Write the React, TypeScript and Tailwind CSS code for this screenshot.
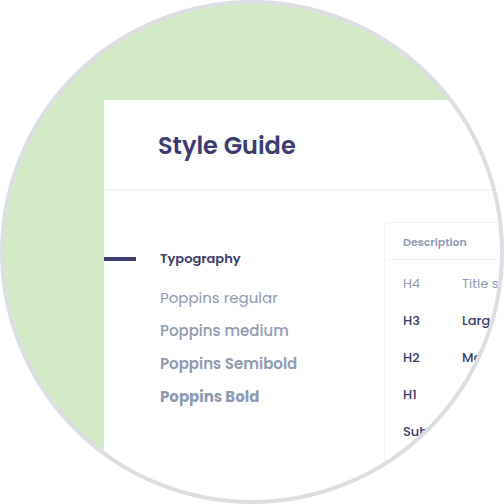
import React from "react";

type NavItem = { label: string; className: string };
type Row = { tag: string; description: string; muted?: boolean };

const navItems: NavItem[] = [
  { label: "Poppins regular", className: "font-normal" },
  { label: "Poppins medium", className: "font-medium" },
  { label: "Poppins Semibold", className: "font-semibold" },
  { label: "Poppins Bold", className: "font-bold" },
];

const rows: Row[] = [
  { tag: "H4", description: "Title s", muted: true },
  { tag: "H3", description: "Larg" },
  { tag: "H2", description: "Mo" },
  { tag: "H1", description: "" },
  { tag: "Sub", description: "" },
];

function SideNav() {
  return (
    <nav className="w-[280px] shrink-0 pt-[58px]">
      <div className="flex h-5 items-center">
        <span className="h-1 w-8 bg-[#3b3d70]" />
        <h2 className="ml-6 text-[13px] leading-5 font-semibold text-[#3b3d70]">Typography</h2>
      </div>
      <ul className="mt-3 ml-14 text-[15px] leading-[33px] whitespace-nowrap text-[#8f9bb3]">
        {navItems.map((item) => (
          <li key={item.label} className={item.className}>
            <a href="#typography">{item.label}</a>
          </li>
        ))}
      </ul>
    </nav>
  );
}

function SizeTable() {
  return (
    <div className="mt-[31px] w-80 shrink-0 self-stretch border border-[#f2f2f5]">
      <table className="w-full table-fixed border-collapse text-left text-[13px] whitespace-nowrap">
        <thead>
          <tr className="h-9 border-b border-[#f2f2f5] text-[11px] text-[#8f9bb3]">
            <th className="w-[77px] pt-0.5 pr-0 pb-0 pl-[18px] font-semibold">Description</th>
            <th />
          </tr>
        </thead>
        <tbody>
          <tr className="h-1.5">
            <td />
          </tr>
          {rows.map((row) => (
            <tr
              key={row.tag}
              className={row.muted ? "h-[37px] text-[#8f9bb3]" : "h-[37px] font-medium text-[#3b3d70]"}
            >
              <td className="py-0 pr-0 pl-[18px]">{row.tag}</td>
              <td className="p-0">{row.description}</td>
            </tr>
          ))}
        </tbody>
      </table>
    </div>
  );
}

export default function App() {
  return (
    <main className="flex aspect-square w-full flex-col overflow-hidden rounded-full border-4 border-[#dddee3] bg-[#d2eac5] pt-24 pl-[100px] font-['Poppins','Inter',sans-serif]">
      <section className="flex min-h-0 flex-1 flex-col bg-white">
        <header className="flex h-[91px] shrink-0 items-center border-b-2 border-[#f2f2f4] pt-0.5 pl-[54px]">
          <h1 className="text-2xl font-semibold text-[#3b3d70]">Style Guide</h1>
        </header>
        <div className="flex min-h-0 flex-1">
          <SideNav />
          <SizeTable />
        </div>
      </section>
    </main>
  );
}
